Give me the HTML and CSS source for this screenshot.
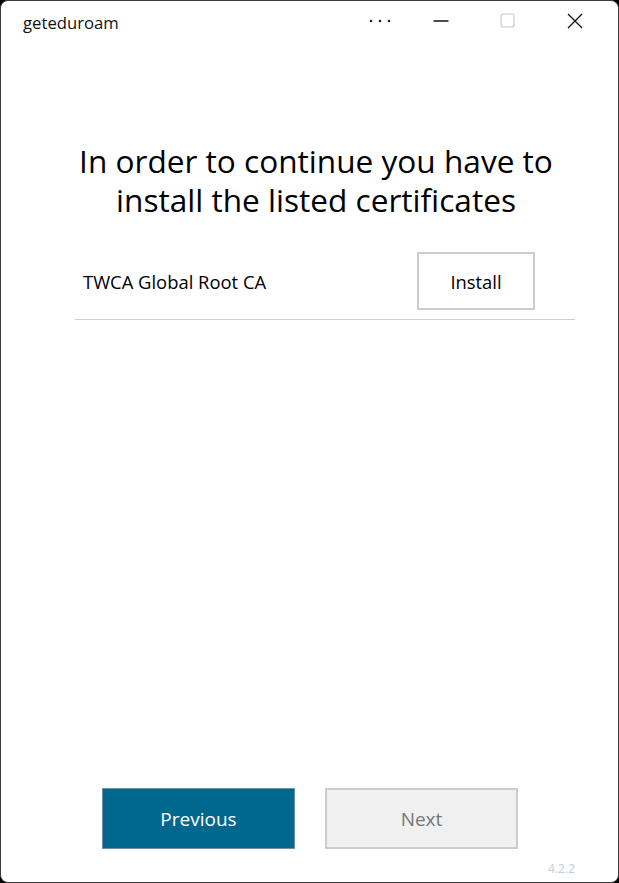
FILE: index.html
```html
<!DOCTYPE html>
<html>
<head>
<meta charset="utf-8">
<link rel="stylesheet" href="styles.css">
</head>
<body>
<div class="window">
  <div class="titlebar">
    <div class="app-title">geteduroam</div>
    <div class="caption-buttons">
      <div class="cap-btn cap-more">
        <svg width="22" height="6" viewBox="0 0 22 6"><circle cx="2" cy="3" r="1.3" fill="#222"/><circle cx="11" cy="3" r="1.3" fill="#222"/><circle cx="20" cy="3" r="1.3" fill="#222"/></svg>
      </div>
      <div class="cap-btn">
        <svg width="16" height="4" viewBox="0 0 16 4"><line x1="0.5" y1="2" x2="15.5" y2="2" stroke="#111" stroke-width="1.3"/></svg>
      </div>
      <div class="cap-btn">
        <svg width="16" height="16" viewBox="0 0 16 16"><rect x="1" y="1" width="13" height="13" rx="2" fill="none" stroke="#c8c8c8" stroke-width="1.2"/></svg>
      </div>
      <div class="cap-btn">
        <svg width="16" height="16" viewBox="0 0 16 16"><path d="M1 1 L15 15 M15 1 L1 15" stroke="#111" stroke-width="1.3" fill="none"/></svg>
      </div>
    </div>
  </div>
  <div class="content">
    <h1 class="heading">In order to continue you have to install the listed certificates</h1>
    <div class="cert-row">
      <span class="cert-name">TWCA Global Root CA</span>
      <button class="install-btn">Install</button>
    </div>
  </div>
  <div class="footer">
    <div class="nav-buttons">
      <button class="btn-prev">Previous</button>
      <button class="btn-next">Next</button>
    </div>
    <div class="version">4.2.2</div>
  </div>
</div>
</body>
</html>
```

FILE: styles.css
```css
html, body {
  margin: 0;
  padding: 0;
  background: #000;
}
body {
  font-family: "Open Sans", "Noto Sans", "Liberation Sans", sans-serif;
}
.window {
  width: 619px;
  height: 883px;
  box-sizing: border-box;
  background: #fff;
  border: 1px solid #3c3c3c;
  border-radius: 8px;
  display: flex;
  flex-direction: column;
  overflow: hidden;
}
.titlebar {
  height: 40px;
  display: flex;
  align-items: center;
  justify-content: space-between;
}
.app-title {
  padding-left: 22px;
  padding-top: 2px;
  font-size: 16.7px;
  color: #111;
}
.caption-buttons {
  display: flex;
  padding-right: 10px;
  height: 100%;
}
.cap-btn {
  width: 67px;
  display: flex;
  align-items: center;
  justify-content: center;
}
.cap-more {
  padding-left: 12px;
  width: 55px;
}
.content {
  flex: 1;
  padding: 0 43px 0 74px;
}
.heading {
  margin: 100px 0 0 0;
  font-weight: normal;
  font-size: 31.6px;
  line-height: 39px;
  text-align: center;
  color: #000;
  padding: 0 18px 0 0;
}
.cert-row {
  margin-top: 33px;
  display: flex;
  align-items: center;
  justify-content: space-between;
  border-bottom: 1px solid #d0d0d0;
  padding: 0 40px 9px 8px;
}
.cert-name {
  font-size: 18.4px;
  color: #000;
}
.install-btn {
  width: 118px;
  height: 58px;
  background: #fff;
  border: 2px solid #cccccc;
  font-family: inherit;
  font-size: 18.4px;
  color: #000;
}
.footer {
  display: flex;
  flex-direction: column;
  padding-bottom: 5px;
}
.nav-buttons {
  display: flex;
  gap: 30px;
  padding-left: 101px;
}
.btn-prev, .btn-next {
  width: 193px;
  height: 61px;
  font-family: inherit;
  font-size: 19px;
  box-sizing: border-box;
}
.btn-prev {
  background: #00678f;
  border: 1px solid #6b93a8;
  color: #fff;
}
.btn-next {
  background: #f0f0f0;
  border: 2px solid #cccccc;
  color: #777;
}
.version {
  align-self: flex-end;
  margin-right: 43px;
  margin-top: 11px;
  font-size: 12px;
  color: #c3ccd8;
}
```
